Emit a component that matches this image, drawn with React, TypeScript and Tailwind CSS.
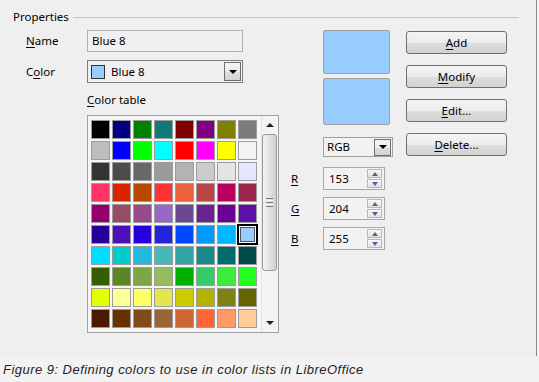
import React from "react";

const palette: string[][] = [
  ["#000000", "#000080", "#008000", "#0e7a7a", "#800000", "#800080", "#808000", "#7c7c7c"],
  ["#bdbdbd", "#0000ff", "#00ff00", "#00ffff", "#ff0000", "#ff00ff", "#ffff00", "#f4f4f4"],
  ["#333333", "#4c4c4c", "#686868", "#9a9a9a", "#b3b3b3", "#cbcbcb", "#e4e4e4", "#e6e6ff"],
  ["#ff3366", "#dc2300", "#b84700", "#ff3333", "#eb613d", "#b84747", "#b8005c", "#99284c"],
  ["#94006b", "#994a64", "#994a8c", "#9966cc", "#6b4794", "#6b2394", "#6b0094", "#5e11a6"],
  ["#280099", "#4a12b8", "#2300dc", "#2323dc", "#0047ff", "#0099ff", "#00b8ff", "#99ccff"],
  ["#00dcff", "#00cccc", "#23b8dc", "#47b8b8", "#33a3a3", "#198a8a", "#006b6b", "#004a4a"],
  ["#355e00", "#5c8526", "#7da647", "#94bd5e", "#00ae00", "#33cc66", "#3deb3d", "#23ff23"],
  ["#e6ff00", "#ffff99", "#ffff66", "#e6e64c", "#cccc00", "#b3b300", "#808019", "#666600"],
  ["#4c1900", "#663300", "#804c19", "#996633", "#cc6633", "#ff6633", "#ff9966", "#ffcc99"],
];

const btnBg =
  "bg-[linear-gradient(to_bottom,#f4f4f4_0%,#ececec_50%,#dedede_51%,#d2d2d2_100%)]";

function DropBtn() {
  return (
    <div className={`w-[17px] h-[19px] border border-[#707070] ${btnBg} flex items-center justify-center`}>
      <div className="w-0 h-0 border-l-[4px] border-r-[4px] border-t-[4px] border-l-transparent border-r-transparent border-t-black" />
    </div>
  );
}

function SpinBox({ value }: { value: string }) {
  return (
    <div className="w-[62px] h-[23px] border border-[#a8a8a8] bg-[#f2f2f2] flex items-center justify-between pl-[5px] pr-[2px]">
      <span>{value}</span>
      <div className="flex flex-col gap-px">
        <div className="w-[15px] h-[9px] border border-[#b8b8b8] bg-[linear-gradient(to_bottom,#f7f7f7,#e2e2e2)] flex items-center justify-center">
          <div className="w-0 h-0 border-l-[3.5px] border-r-[3.5px] border-b-[4px] border-l-transparent border-r-transparent border-b-[#4d6590]" />
        </div>
        <div className="w-[15px] h-[9px] border border-[#b8b8b8] bg-[linear-gradient(to_bottom,#f7f7f7,#e2e2e2)] flex items-center justify-center">
          <div className="w-0 h-0 border-l-[3.5px] border-r-[3.5px] border-t-[4px] border-l-transparent border-r-transparent border-t-[#4d6590]" />
        </div>
      </div>
    </div>
  );
}

function Btn({ u, rest }: { u: string; rest: string }) {
  return (
    <div className={`w-[101px] h-[23px] rounded-[3px] border border-[#707070] ${btnBg} flex items-center justify-center text-black`}>
      <span>
        <span className="underline underline-offset-2">{u}</span>
        {rest}
      </span>
    </div>
  );
}

export default function App() {
  return (
    <div
      className="w-[539px] h-[382px] bg-[#f2f2f2] text-[11.5px] leading-[16px] text-black overflow-hidden"
      style={{ fontFamily: "'Noto Sans', 'Open Sans', sans-serif" }}
    >
      <div className="h-[356px] w-[537px] bg-[#efefef] border-r border-[#8a8a8a]">
        {/* header */}
        <div className="flex items-center pl-[13px] pt-[9px] h-[25px] pr-[17px]">
          <span>Properties</span>
          <div className="flex-1 h-px bg-[#c4c4c4] ml-[4px]" />
        </div>

        <div className="flex">
          {/* left column */}
          <div className="pl-[26px] w-[279px] flex flex-col">
            <div className="flex items-center mt-[5px] h-[22px]">
              <span className="w-[61px]">
                <span className="underline underline-offset-2">N</span>ame
              </span>
              <div className="w-[156px] h-[22px] border border-[#b0b0b0] bg-[#f0f0f0] flex items-center pl-[4px]">
                Blue 8
              </div>
            </div>
            <div className="flex items-center mt-[8px] h-[23px]">
              <span className="w-[61px]">
                C<span className="underline underline-offset-2">o</span>lor
              </span>
              <div className="w-[156px] h-[23px] border border-[#7e7e7e] bg-[#f0f0f0] flex items-center pl-[3px] pr-[1px]">
                <div className="w-[14px] h-[14px] border border-[#333] bg-[#99ccff]" />
                <span className="ml-[6px] flex-1">Blue 8</span>
                <DropBtn />
              </div>
            </div>
            <div className="ml-[61px] mt-[9px] h-[16px]">
              <span className="underline underline-offset-2">C</span>olor table
            </div>
            <div className="ml-[61px] mt-[7px] w-[192px] h-[218px] border border-[#a0a0a0] bg-[#f5f5f5] flex">
              <div className="pl-[3px] pt-[4px] grid grid-cols-[repeat(8,19px)] grid-rows-[repeat(10,19px)] gap-[2px]">
                {palette.flatMap((row, ri) =>
                  row.map((c, ci) =>
                    ri === 5 && ci === 7 ? (
                      <div key={`${ri}-${ci}`} className="-m-px w-[21px] h-[21px] border-2 border-black">
                        <div className="w-full h-full border border-white">
                          <div className="w-full h-full border border-[#555]" style={{ backgroundColor: c }} />
                        </div>
                      </div>
                    ) : (
                      <div
                        key={`${ri}-${ci}`}
                        className="w-[19px] h-[19px] border border-[#9c9c9c]"
                        style={{ backgroundColor: c }}
                      />
                    )
                  )
                )}
              </div>
              {/* scrollbar */}
              <div className="ml-[4px] w-[16px] h-full bg-[#f3f3f3] border-l border-[#e4e4e4] flex flex-col items-center">
                <div className="h-[18px] flex items-center justify-center">
                  <div className="w-0 h-0 border-l-[4px] border-r-[4px] border-b-[4px] border-l-transparent border-r-transparent border-b-[#222]" />
                </div>
                <div className="w-[15px] h-[137px] rounded-[3px] border border-[#9a9a9a] bg-[linear-gradient(to_right,#f2f2f2,#e4e4e4_45%,#cfcfcf)] flex flex-col items-center justify-center gap-[1px]">
                  <div className="w-[7px] h-px bg-[#7c7c7c]" />
                  <div className="w-[7px] h-px bg-[#f8f8f8]" />
                  <div className="w-[7px] h-px bg-[#7c7c7c]" />
                  <div className="w-[7px] h-px bg-[#f8f8f8]" />
                  <div className="w-[7px] h-px bg-[#7c7c7c]" />
                </div>
                <div className="flex-1" />
                <div className="h-[18px] flex items-center justify-center">
                  <div className="w-0 h-0 border-l-[4px] border-r-[4px] border-t-[4px] border-l-transparent border-r-transparent border-t-[#222]" />
                </div>
              </div>
            </div>
          </div>

          {/* middle column */}
          <div className="ml-[12px] w-[102px] flex flex-col">
            <div className="ml-[32px] mt-[5px] w-[67px] h-[44px] rounded-[2px] border border-[#a0a0a0] bg-[#99ccff]" />
            <div className="ml-[32px] mt-[4px] w-[67px] h-[47px] rounded-[2px] border border-[#a0a0a0] bg-[#99ccff]" />
            <div className="ml-[32px] mt-[12px] w-[70px] h-[20px] border border-[#a0a0a0] bg-[#f2f2f2] flex items-center justify-between pl-[3px] pr-px">
              <span>RGB</span>
              <div className="-my-px">
                <div className={`w-[17px] h-[17px] border border-[#707070] ${btnBg} flex items-center justify-center`}>
                  <div className="w-0 h-0 border-l-[4px] border-r-[4px] border-t-[4px] border-l-transparent border-r-transparent border-t-black" />
                </div>
              </div>
            </div>
            {[
              ["R", "153"],
              ["G", "204"],
              ["B", "255"],
            ].map(([l, v], i) => (
              <div key={l} className={`flex items-center ${i === 0 ? "mt-[10px]" : "mt-[7px]"}`}>
                <span className="w-[32px] underline underline-offset-2">{l}</span>
                <SpinBox value={v} />
              </div>
            ))}
          </div>

          {/* buttons */}
          <div className="ml-[13px] mt-[6px] flex flex-col gap-[11px]">
            <Btn u="A" rest="dd" />
            <Btn u="M" rest="odify" />
            <Btn u="E" rest="dit..." />
            <Btn u="D" rest="elete..." />
          </div>
        </div>
      </div>

      <div
        className="pl-[3px] pt-[6px] italic text-[13px] leading-[16px] text-[#222] tracking-[0.47px]"
        style={{ fontFamily: "'Liberation Sans', Arial, sans-serif" }}
      >
        Figure 9: Defining colors to use in color lists in LibreOffice
      </div>
    </div>
  );
}
